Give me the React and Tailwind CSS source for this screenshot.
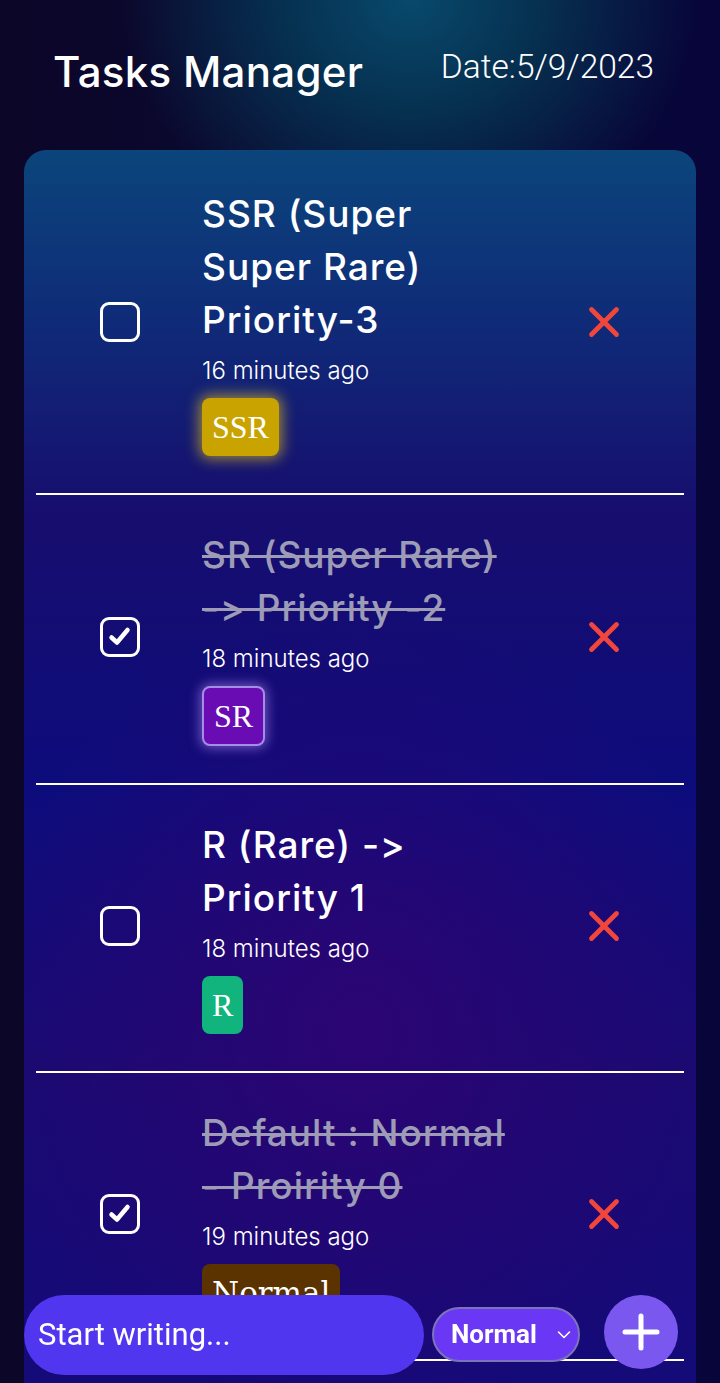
import React from "react";

const tasks = [
  { title: "SSR (Super Super Rare) Priority-3", time: "16 minutes ago", done: false, badge: "SSR", kind: "ssr" },
  { title: "SR (Super Rare) -> Priority -2", time: "18 minutes ago", done: true, badge: "SR", kind: "sr" },
  { title: "R (Rare) -> Priority 1", time: "18 minutes ago", done: false, badge: "R", kind: "r" },
  { title: "Default : Normal - Proirity 0", time: "19 minutes ago", done: true, badge: "Normal", kind: "normal" },
];

function Badge({ kind, label }) {
  const cls = {
    ssr: "h-[58px] bg-[#c9a400] shadow-[0_0_14px_3px_rgba(245,205,20,0.6)] text-[32px]",
    sr: "h-[60px] bg-[#6a0cb4] border-2 border-[#a58ce6] shadow-[0_0_12px_2px_rgba(190,150,255,0.55)] text-[32px]",
    r: "h-[58px] bg-[#10b47c] text-[32px]",
    normal: "h-[58px] bg-[#5a3300] text-[31px]",
  }[kind];
  const font =
    kind === "normal"
      ? '"DejaVu Serif", "Liberation Serif", serif'
      : '"Liberation Serif", "DejaVu Serif", serif';
  return (
    <div
      className={`inline-flex items-center rounded-[8px] px-[10px] text-white ${cls}`}
      style={{ fontFamily: font }}
    >
      {label}
    </div>
  );
}

function Checkbox({ checked }) {
  return (
    <div className="flex h-[40px] w-[40px] items-center justify-center rounded-[9px] border-[3px] border-white">
      {checked && (
        <svg width="34" height="34" viewBox="0 0 34 34">
          <path d="M8.5 17.5 L14 22.5 L24.5 10" fill="none" stroke="white" strokeWidth="4.5" strokeLinecap="round" strokeLinejoin="round" />
        </svg>
      )}
    </div>
  );
}

function RedX() {
  return (
    <svg width="34" height="34" viewBox="0 0 34 34">
      <path d="M4.5 4.5 L29.5 29.5 M29.5 4.5 L4.5 29.5" stroke="#f0463c" strokeWidth="4.8" strokeLinecap="round" />
    </svg>
  );
}

function Row({ t, first }) {
  return (
    <div
      className={`grid grid-cols-[166px_312px_1fr] items-center border-b-2 border-white pb-[37px] ${
        first ? "pt-[37px]" : "pt-[33px]"
      }`}
    >
      <div className="flex justify-center pl-[2px]">
        <Checkbox checked={t.done} />
      </div>
      <div className="flex flex-col items-start">
        <div
          className={`text-[37px] font-medium leading-[53px] tracking-[1px] [font-feature-settings:'calt'_0,'liga'_0] ${
            t.done
              ? "text-[#9d9bb6] line-through decoration-[#9d9bb6] decoration-[3px]"
              : "text-white"
          }`}
        >
          {t.title}
        </div>
        <div className="mt-[9px] text-[24px] font-light leading-[32px] text-white">{t.time}</div>
        <div className="mt-[11px]">
          <Badge kind={t.kind} label={t.badge} />
        </div>
      </div>
      <div className="flex justify-center pl-[10px]">
        <RedX />
      </div>
    </div>
  );
}

export default function App() {
  return (
    <div
      className="relative h-[1383px] w-full overflow-hidden bg-[radial-gradient(ellipse_40%_18%_at_57%_0%,#08496c_0%,#063050_45%,transparent_100%),linear-gradient(90deg,#0c0628_0%,#0a0a34_50%,#07053a_100%)]"
      style={{ fontFamily: 'Inter, "Noto Sans", sans-serif' }}
    >
      <header className="flex h-[150px] items-start justify-between pl-[53px] pr-[66px] pt-[44px]">
        <h1 className="text-[42px] font-medium leading-[56px] tracking-[0.3px] text-white">Tasks Manager</h1>
        <div
          className="pt-[1px] text-[33.5px] font-light leading-[44px] text-white"
          style={{ fontFamily: 'Roboto, "Noto Sans", sans-serif' }}
        >
          Date:5/9/2023
        </div>
      </header>

      <main className="mx-[24px] rounded-t-[22px] bg-[radial-gradient(ellipse_55%_30%_at_50%_62%,rgba(45,4,115,0.9)_0%,transparent_100%),linear-gradient(180deg,#0b457b_0%,#0f2b78_12%,#170d6e_26%,#0d0c7c_45%,#1a0a72_65%,#100a7c_100%)] px-[12px] pb-[200px]">
        {tasks.map((t, i) => (
          <Row key={i} t={t} first={i === 0} />
        ))}
      </main>

      <div
        className="fixed bottom-0 left-0 right-0 flex items-start pb-[8px] pl-[24px]"
        style={{ fontFamily: 'Roboto, "Noto Sans", sans-serif' }}
      >
        <div className="flex h-[80px] w-[400px] items-center rounded-full bg-[#5036ef] pl-[14px] text-[31px] text-white">
          Start writing...
        </div>
        <div className="ml-[8px] mt-[12px] flex h-[55px] w-[148px] items-center rounded-full border-2 border-[#7d74b8] bg-[#6a38f4] pl-[17px] text-[26px] font-bold text-white">
          Normal
          <svg className="ml-[20px]" width="14" height="10" viewBox="0 0 14 10">
            <path d="M1.5 2 L7 7.5 L12.5 2" fill="none" stroke="white" strokeWidth="1.6" strokeLinecap="round" strokeLinejoin="round" />
          </svg>
        </div>
        <div className="ml-[24px] flex h-[74px] w-[74px] items-center justify-center rounded-full bg-[#7a58ef]">
          <svg width="40" height="40" viewBox="0 0 40 40">
            <path d="M20 4 V36 M4 20 H36" stroke="white" strokeWidth="5" strokeLinecap="round" />
          </svg>
        </div>
      </div>
    </div>
  );
}
